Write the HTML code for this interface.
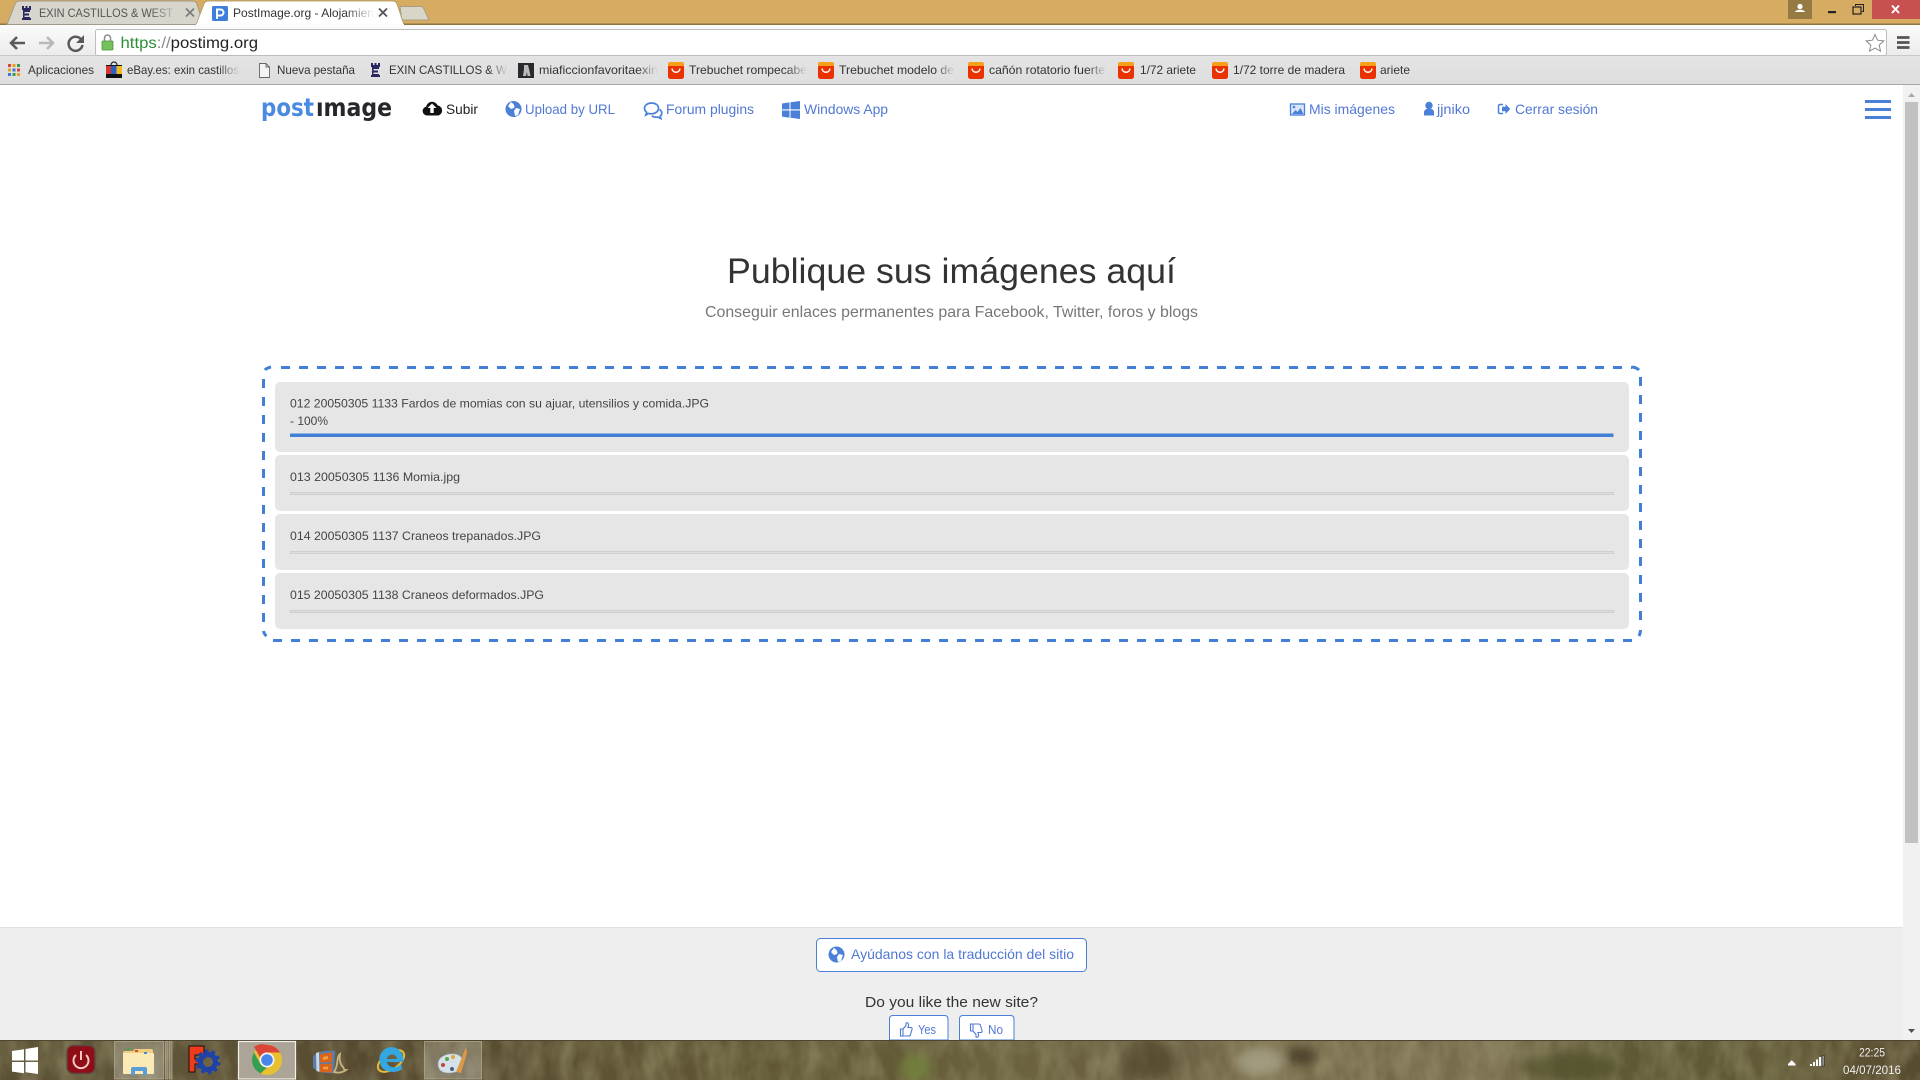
<!DOCTYPE html>
<html lang="es"><head><meta charset="utf-8"><title>PostImage.org</title>
<style>
html,body{margin:0;padding:0;width:1920px;height:1080px;overflow:hidden;background:#fff}
svg{display:block}
text{font-family:"Liberation Sans",Arial,sans-serif}
.bm{font-size:12px;fill:#333}
.nav{font-size:14px;fill:#5178d4}
.row{font-size:12px;fill:#444}
</style></head><body>
<svg width="1920" height="1080" viewBox="0 0 1920 1080" xmlns="http://www.w3.org/2000/svg">
<defs>
<linearGradient id="tool" x1="0" y1="0" x2="0" y2="1"><stop offset="0" stop-color="#fbfbfb"/><stop offset="1" stop-color="#ececec"/></linearGradient>
<linearGradient id="bmb" x1="0" y1="0" x2="0" y2="1"><stop offset="0" stop-color="#e4e4e4"/><stop offset="1" stop-color="#dedede"/></linearGradient>
<linearGradient id="tb" x1="0" y1="0" x2="1" y2="0">
<stop offset="0" stop-color="#5a5033"/><stop offset=".08" stop-color="#605538"/><stop offset=".2" stop-color="#56492f"/><stop offset=".3" stop-color="#5d5233"/><stop offset=".47" stop-color="#635a37"/><stop offset=".52" stop-color="#6c6340"/><stop offset=".6" stop-color="#6a5f42"/><stop offset=".66" stop-color="#7b6f4e"/><stop offset=".72" stop-color="#75694a"/><stop offset=".78" stop-color="#7a6f50"/><stop offset=".85" stop-color="#5f5a36"/><stop offset=".93" stop-color="#625a38"/><stop offset="1" stop-color="#574a2e"/></linearGradient>
<filter id="noise" x="0" y="0" width="100%" height="100%"><feTurbulence type="fractalNoise" baseFrequency=".05 .025" numOctaves="3" seed="7"/><feColorMatrix values="0 0 0 0 .5  0 0 0 0 .48  0 0 0 0 .28  1.4 0 0 0 -.45"/></filter>
<filter id="blur" x="-30%" y="-100%" width="160%" height="300%"><feGaussianBlur stdDeviation="5"/></filter>
<clipPath id="tbc"><rect y="1040" width="1920" height="40"/></clipPath>
<linearGradient id="fadeT1" x1="0" x2="1"><stop offset="0" stop-color="#d8d5cd" stop-opacity="0"/><stop offset="1" stop-color="#d8d5cd"/></linearGradient>
<linearGradient id="fadeT2" x1="0" x2="1"><stop offset="0" stop-color="#fff" stop-opacity="0"/><stop offset="1" stop-color="#fff"/></linearGradient>
<linearGradient id="fadeB" x1="0" x2="1"><stop offset="0" stop-color="#e1e1e1" stop-opacity="0"/><stop offset="1" stop-color="#e1e1e1"/></linearGradient>
<linearGradient id="tile" x1="0" y1="0" x2="0" y2="1"><stop offset="0" stop-color="#fff" stop-opacity=".2"/><stop offset="1" stop-color="#fff" stop-opacity=".26"/></linearGradient>
<g id="ali"><rect width="16" height="17" rx="2.5" fill="#ea3200"/><path d="M0 2.5A2.5 2.5 0 0 1 2.5 0h11A2.5 2.5 0 0 1 16 2.5V4H0z" fill="#f5a019"/><path d="M4 6.5c.5 5 7.500 5 8 0" fill="none" stroke="#fff" stroke-width="1.400"/></g>
<g id="exin" fill="#28285f"><path d="M0 0h2v2h1.500V0h2v2H7V0h2v4H8v2H2.500v1.500H7v2H2.500V11H8v1h1v2H0v-2h1V4H0z"/></g>
</defs>

<!-- title bar -->
<rect width="1920" height="24" fill="#d6ab62"/>
<rect y="23.500" width="1920" height="1.500" fill="#8d7543"/>
<!-- toolbar -->
<rect y="25" width="1920" height="30" fill="url(#tool)"/>
<rect y="55" width="1920" height="29" fill="url(#bmb)"/>
<rect y="55" width="1920" height="1" fill="#c9c9c9"/>
<rect y="84" width="1920" height="1" fill="#a8a8a8"/>

<!-- tabs -->
<path d="M7 24.500 15 4Q16 1 20 1H192Q196 1 197 4L203 24.500Z" fill="#d8d5cd" stroke="#a09a86"/>
<path d="M196 25 204 4Q205 1 209 1H392Q396 1 397 4L404 25Z" fill="#fff" stroke="#a5935f" stroke-width=".7"/>
<rect x="196" y="24" width="208" height="3" fill="#fbfbfb"/>
<path d="M400 6.500H421Q423 6.500 424 9L429 20H404Q402 20 401.500 18Z" fill="#d8d5c9" stroke="#a89e80"/>
<use href="#exin" x="22" y="6"/>
<text x="39" y="17" font-size="12" fill="#555" textLength="134" lengthAdjust="spacingAndGlyphs">EXIN CASTILLOS &amp; WEST</text>
<rect x="150" y="4" width="30" height="18" fill="url(#fadeT1)"/>
<path d="M186 8.500l8 8m0-8l-8 8" stroke="#7b7b7b" stroke-width="1.700"/>
<rect x="212" y="6" width="16" height="15" rx="1.500" fill="#3f7fdc"/>
<path d="M217 19V9.500h3.500a3 3 0 0 1 0 6H217" fill="none" stroke="#fff" stroke-width="2"/>
<text x="233" y="17" font-size="12" fill="#333" textLength="141" lengthAdjust="spacingAndGlyphs">PostImage.org - Alojamien</text>
<rect x="345" y="4" width="30" height="18" fill="url(#fadeT2)"/>
<path d="M379 8.500l8 8m0-8l-8 8" stroke="#555" stroke-width="1.800"/>

<!-- window controls -->
<rect x="1788" width="24" height="19" fill="#957a44"/>
<circle cx="1800" cy="6.500" r="2.600" fill="#fff"/><path d="M1795 12c.5-3 9.500-3 10 0z" fill="#fff"/>
<rect x="1828" y="11" width="8" height="2.200" fill="#222"/>
<rect x="1853" y="7" width="8" height="7" fill="none" stroke="#222" stroke-width="1.200"/><path d="M1855.500 6V4.500h8v7H1862" fill="none" stroke="#222" stroke-width="1"/>
<rect x="1872" width="48" height="19" fill="#c75050"/>
<path d="M1892 5.500l7 7.500m0-7.500l-7 7.500" stroke="#fff" stroke-width="1.900"/>

<!-- nav buttons -->
<path d="M25 43H11m6-6-6 6 6 6" fill="none" stroke="#5a5a5a" stroke-width="2.600"/>
<path d="M39 43h14m-6-6 6 6-6 6" fill="none" stroke="#b9b9b9" stroke-width="2.600"/>
<path d="M81.500 40A7 7 0 1 0 82.500 45" fill="none" stroke="#5a5a5a" stroke-width="2.500"/><path d="M84 35v8h-8z" fill="#5a5a5a"/>
<!-- omnibox -->
<rect x="95.500" y="29.500" width="1791" height="26" rx="2" fill="#fff" stroke="#bdbdbd"/>
<rect x="102" y="41" width="11" height="9" rx="1" fill="#74c25a" stroke="#4b8f3b" stroke-width=".8"/>
<path d="M104.500 41v-3a3 3 0 0 1 6 0v3" fill="none" stroke="#8a8a8a" stroke-width="1.500"/>
<text x="120.500" y="48" font-size="16" textLength="137.500" lengthAdjust="spacingAndGlyphs"><tspan fill="#2f8f35">https</tspan><tspan fill="#8a8a8a">://</tspan><tspan fill="#222">postimg.org</tspan></text>
<path d="M1875 34.500l2.600 5.700 6.200.7-4.600 4.200 1.300 6.100-5.500-3.100-5.500 3.100 1.300-6.100-4.600-4.200 6.200-.7z" fill="#fff" stroke="#8a8a8a" stroke-width="1"/>
<path d="M1897 37.500h12.500M1897 42.500h12.500M1897 47.500h12.500" stroke="#555" stroke-width="2.800"/>

<!-- bookmarks -->
<g>
<g fill="#d9453c"><rect x="8" y="64" width="3" height="3"/><rect x="12.500" y="64" width="3" height="3" fill="#e9a021"/><rect x="17" y="64" width="3" height="3" fill="#3c9a4c"/></g>
<g><rect x="8" y="68.500" width="3" height="3" fill="#e9a021"/><rect x="12.500" y="68.500" width="3" height="3" fill="#3b78d8"/><rect x="17" y="68.500" width="3" height="3" fill="#d9453c"/><rect x="8" y="73" width="3" height="3" fill="#3b78d8"/><rect x="12.500" y="73" width="3" height="3" fill="#3c9a4c"/><rect x="17" y="73" width="3" height="3" fill="#e9a021"/></g>
<text class="bm" x="28" y="74" textLength="66" lengthAdjust="spacingAndGlyphs">Aplicaciones</text>
<path d="M111 65a3 3 0 0 1 6 0" fill="none" stroke="#222" stroke-width="1.200"/>
<rect x="106" y="65" width="16" height="13" fill="#111"/><rect x="106" y="66" width="5" height="8" fill="#d8362e"/><rect x="111" y="66" width="5.500" height="8" fill="#2c5fc4"/><rect x="116.500" y="66" width="5.500" height="8" fill="#f0bb1a"/>
<text class="bm" x="127" y="74" textLength="112" lengthAdjust="spacingAndGlyphs">eBay.es: exin castillos</text>
<rect x="218" y="60" width="22" height="20" fill="url(#fadeB)"/>
<path d="M259.500 63.500h6.500l3.500 3.500v10.500h-10zM266 63.500V67h3.500" fill="#f3f3f3" stroke="#666" stroke-width=".9"/>
<text class="bm" x="277" y="74" textLength="78" lengthAdjust="spacingAndGlyphs">Nueva pestaña</text>
<use href="#exin" x="371" y="63"/>
<text class="bm" x="389" y="74" textLength="118" lengthAdjust="spacingAndGlyphs">EXIN CASTILLOS &amp; W</text>
<rect x="488" y="60" width="20" height="20" fill="url(#fadeB)"/>
<rect x="518" y="63" width="16" height="15" fill="#2a2a2e"/><path d="M524 65h4l1 4 1.500 7h-3l-.5-4-1 4h-3l1-7z" fill="#bbb"/>
<text class="bm" x="539" y="74" textLength="119" lengthAdjust="spacingAndGlyphs">miaficcionfavoritaexin</text>
<rect x="638" y="60" width="20" height="20" fill="url(#fadeB)"/>
<use href="#ali" x="668" y="62"/>
<text class="bm" x="689" y="74" textLength="118" lengthAdjust="spacingAndGlyphs">Trebuchet rompecabe</text>
<rect x="787" y="60" width="20" height="20" fill="url(#fadeB)"/>
<use href="#ali" x="818" y="62"/>
<text class="bm" x="839" y="74" textLength="115" lengthAdjust="spacingAndGlyphs">Trebuchet modelo de</text>
<rect x="935" y="60" width="20" height="20" fill="url(#fadeB)"/>
<use href="#ali" x="968" y="62"/>
<text class="bm" x="989" y="74" textLength="116" lengthAdjust="spacingAndGlyphs">cañón rotatorio fuerte</text>
<rect x="1087" y="60" width="20" height="20" fill="url(#fadeB)"/>
<use href="#ali" x="1118" y="62"/>
<text class="bm" x="1140" y="74" textLength="56" lengthAdjust="spacingAndGlyphs">1/72 ariete</text>
<use href="#ali" x="1212" y="62"/>
<text class="bm" x="1233" y="74" textLength="112" lengthAdjust="spacingAndGlyphs">1/72 torre de madera</text>
<use href="#ali" x="1360" y="62"/>
<text class="bm" x="1380" y="74" textLength="30" lengthAdjust="spacingAndGlyphs">ariete</text>
</g>

<!-- page nav -->
<text x="261" y="116" font-size="25" font-weight="700" style="font-family:'DejaVu Sans',sans-serif" fill="#4a8ae0" textLength="53" lengthAdjust="spacingAndGlyphs">post</text>
<text x="316" y="116" font-size="25" font-weight="700" style="font-family:'DejaVu Sans',sans-serif" fill="#26262b" textLength="76" lengthAdjust="spacingAndGlyphs">ımage</text>

<path d="M427 115.500a4.500 4.500 0 0 1-.8-8.900 6 6 0 0 1 11.400-1.200 5.200 5.200 0 0 1 .9 10.100z" fill="#111"/><path d="M432 102.500l4.500 4.500h-2.800v5h-3.400v-5h-2.800z" fill="#fff" transform="translate(0 1)"/>
<text x="446" y="114" font-size="14" fill="#222" textLength="32" lengthAdjust="spacingAndGlyphs">Subir</text>

<circle cx="513.500" cy="109" r="8" fill="#4a80d8"/><path d="M511 102c3 2 4 4 3 6l-3 1-3-3zM516 108l4 1-2 6-3 1-1-5z" fill="#fff"/>
<text class="nav" x="525" y="114" textLength="90" lengthAdjust="spacingAndGlyphs">Upload by URL</text>

<path d="M651.500 103c-4 0-7 2.300-7 5.300 0 1.700.9 3.100 2.200 4l-.9 2.700 3.100-1.600c.9.300 1.700.4 2.600.4 4 0 7-2.400 7-5.500s-3-5.300-7-5.300z" fill="#fff" stroke="#4a80d8" stroke-width="1.700"/><path d="M659.500 109.500c1.400.9 2.300 2.200 2.300 3.600 0 1.200-.6 2.200-1.600 3l.7 2.400-3-1.400c-2.200.4-4.600 0-6-1.300" fill="none" stroke="#4a80d8" stroke-width="1.700"/>
<text class="nav" x="666" y="114" textLength="88" lengthAdjust="spacingAndGlyphs">Forum plugins</text>

<path d="M782 103.500l7.500-1.100v7H782zM790.500 102.200 800 101v8.400h-9.500zM782 110.500h7.500v7.200L782 116.600zM790.500 110.500h9.500V119l-9.500-1.300z" fill="#4a80d8"/>
<text class="nav" x="804" y="114" textLength="84" lengthAdjust="spacingAndGlyphs">Windows App</text>

<rect x="1290.500" y="104" width="14" height="11" fill="#dbe6f8" stroke="#4a80d8" stroke-width="1.300"/><path d="M1292 114l3.500-4 2 2 3-4 3 6z" fill="#4a80d8"/><circle cx="1294" cy="107" r="1.300" fill="#4a80d8"/>
<text class="nav" x="1309" y="114" textLength="86" lengthAdjust="spacingAndGlyphs">Mis imágenes</text>

<circle cx="1429" cy="105.500" r="3.700" fill="#4a80d8"/><path d="M1424 115.500v-3c0-2.500 2-3.500 3-3.500h4c1.500 0 3 1 3 3.500v3z" fill="#4a80d8"/>
<text class="nav" x="1437" y="114" textLength="33" lengthAdjust="spacingAndGlyphs">jjniko</text>

<path d="M1503 104.500h-3q-1.500 0-1.500 1.500v6q0 1.500 1.500 1.500h3" fill="none" stroke="#4a80d8" stroke-width="1.500"/><path d="M1502 106.800h3.500V104l4.800 5-4.800 5v-2.800H1502z" fill="#4a80d8"/>
<text class="nav" x="1515" y="114" textLength="83" lengthAdjust="spacingAndGlyphs">Cerrar sesión</text>

<rect x="1865" y="100" width="26" height="3" fill="#4a80d8"/><rect x="1865" y="108" width="26" height="3" fill="#4a80d8"/><rect x="1865" y="116" width="26" height="3" fill="#4a80d8"/>

<!-- headings -->
<text x="727" y="283" font-size="35" fill="#333" textLength="449" lengthAdjust="spacingAndGlyphs">Publique sus imágenes aquí</text>
<text x="705" y="317" font-size="16" fill="#777" textLength="493" lengthAdjust="spacingAndGlyphs">Conseguir enlaces permanentes para Facebook, Twitter, foros y blogs</text>

<!-- dashed box -->
<g fill="none" stroke="#4280d8" stroke-width="3">
<line x1="281" y1="367.500" x2="1632" y2="367.500" stroke-dasharray="9 9"/>
<line x1="273" y1="640.500" x2="1633" y2="640.500" stroke-dasharray="9 9"/>
<line x1="263.500" y1="379" x2="263.500" y2="626" stroke-dasharray="9 9"/>
<line x1="1640.500" y1="377" x2="1640.500" y2="626" stroke-dasharray="9 9"/>
<path d="M265 370q1.500-2 6-3"/><path d="M1632 367q4.500 .5 7 3"/><path d="M263.500 631q.5 3 3 5"/><path d="M1640.500 630q0 3-1.500 6"/>
</g>

<!-- rows -->
<rect x="275" y="382" width="1354" height="70" rx="5" fill="#e6e6e6"/>
<rect x="275" y="455" width="1354" height="56" rx="5" fill="#e6e6e6"/>
<rect x="275" y="514" width="1354" height="56" rx="5" fill="#e6e6e6"/>
<rect x="275" y="573" width="1354" height="56" rx="5" fill="#e6e6e6"/>
<text class="row" x="290" y="407.500" textLength="419" lengthAdjust="spacingAndGlyphs">012 20050305 1133 Fardos de momias con su ajuar, utensilios y comida.JPG</text>
<text class="row" x="290" y="425" textLength="38" lengthAdjust="spacingAndGlyphs">- 100%</text>
<rect x="290" y="433.500" width="1323.500" height="3.500" fill="#4280d8"/>
<text class="row" x="290" y="481" textLength="170" lengthAdjust="spacingAndGlyphs">013 20050305 1136 Momia.jpg</text>
<rect x="290.500" y="492.500" width="1323" height="2" fill="#dedede" stroke="#cfcfcf"/>
<text class="row" x="290" y="540" textLength="251" lengthAdjust="spacingAndGlyphs">014 20050305 1137 Craneos trepanados.JPG</text>
<rect x="290.500" y="551.500" width="1323" height="2" fill="#dedede" stroke="#cfcfcf"/>
<text class="row" x="290" y="599" textLength="254" lengthAdjust="spacingAndGlyphs">015 20050305 1138 Craneos deformados.JPG</text>
<rect x="290.500" y="610.500" width="1323" height="2" fill="#dedede" stroke="#cfcfcf"/>

<!-- footer -->
<rect y="927" width="1903" height="113" fill="#eee"/>
<rect y="927" width="1903" height="1" fill="#e2e2e2"/>
<rect x="816.500" y="938.500" width="270" height="33" rx="4" fill="#fff" stroke="#4a80d8"/>
<circle cx="836.500" cy="954.500" r="8" fill="#4a80d8"/><path d="M834 948c3 2 4 4 3 6l-3 1-3-3zM839 954l4 1-2 6-3 1-1-5z" fill="#fff"/>
<text x="851" y="959" font-size="14" fill="#5178d4" textLength="223" lengthAdjust="spacingAndGlyphs">Ayúdanos con la traducción del sitio</text>
<text x="865" y="1007" font-size="15" fill="#333" textLength="173" lengthAdjust="spacingAndGlyphs">Do you like the new site?</text>
<path d="M889.500 1040v-21q0-3.500 3.500-3.500h51.500q3.500 0 3.500 3.500v21z" fill="#fff" stroke="#4a80d8"/>
<path d="M959.500 1040v-21q0-3.500 3.500-3.500h47.500q3.500 0 3.500 3.500v21z" fill="#fff" stroke="#4a80d8"/>
<path d="M900.500 1029h2.500v7h-2.500zM903 1029l3-3.500v-2.500q2-.8 2.500 1 .3 1.500-.5 3.500h3q1.500.2 1 2l-1.500 5q-.3 1.500-2 1.500H903" fill="none" stroke="#5178d4" stroke-width="1.100"/>
<text x="918" y="1034" font-size="13" fill="#5178d4" textLength="18" lengthAdjust="spacingAndGlyphs">Yes</text>
<path d="M970.500 1031h2.500v-7h-2.500zM973 1031l3 3.500v2.500q2 .8 2.500-1 .3-1.500-.5-3.500h3q1.500-.2 1-2l-1.500-5q-.3-1.500-2-1.500H973" fill="none" stroke="#5178d4" stroke-width="1.100"/>
<text x="988" y="1034" font-size="13" fill="#5178d4" textLength="15" lengthAdjust="spacingAndGlyphs">No</text>

<!-- scrollbar -->
<rect x="1903" y="85" width="17" height="955" fill="#f1f1f1"/>
<rect x="1905" y="102" width="13" height="741" fill="#c1c1c1"/>
<path d="M1908 97l3.500-4 3.500 4z" fill="#a8a8a8"/>
<path d="M1908 1029h7l-3.500 4z" fill="#505050"/>

<!-- taskbar -->
<rect y="1040" width="1920" height="40" fill="url(#tb)"/>
<rect y="1040" width="1920" height="40" filter="url(#noise)" opacity=".5"/>
<g clip-path="url(#tbc)">
<g filter="url(#blur)">
<ellipse cx="915" cy="1068" rx="16" ry="14" fill="#6f7e3a" opacity=".8"/>
<ellipse cx="1260" cy="1062" rx="24" ry="14" fill="#a8a488" opacity=".8"/>
<ellipse cx="1302" cy="1056" rx="16" ry="9" fill="#42361f" opacity=".75"/>
<ellipse cx="1570" cy="1068" rx="50" ry="14" fill="#4e5027" opacity=".7"/>
<ellipse cx="1150" cy="1060" rx="30" ry="20" fill="#4a3c24" opacity=".5"/>
</g>
</g>
<rect y="1040" width="1920" height="1" fill="#4e4630"/>

<path d="M12 1051l12-1.700v11.200H12zM25.500 1049 38 1047v13.500H25.500zM12 1062h12v11.300l-12-1.700zM25.500 1062H38v12l-12.500-1.800z" fill="#fff"/>

<rect x="67" y="1045.500" width="28" height="28" rx="6" fill="#8e0d17" stroke="#5d4a42" stroke-width="1.500"/>
<path d="M76 1055a7.500 7.500 0 1 0 10 0" fill="none" stroke="#f3c9c5" stroke-width="2"/><path d="M81 1051v9" stroke="#f3c9c5" stroke-width="2"/>

<rect x="114.500" y="1041.500" width="49" height="37.500" fill="url(#tile)" stroke="#b7ae96" stroke-opacity=".7"/>
<rect x="165.500" y="1041.500" width="2.500" height="37.500" fill="url(#tile)" stroke="#b7ae96" stroke-opacity=".7"/>
<rect x="169.500" y="1041.500" width="2.500" height="37.500" fill="url(#tile)" stroke="#b7ae96" stroke-opacity=".7"/>
<path d="M123 1053q0-2 2-2h8l2-2h16q2 0 2 2v21q0 2-2 2h-26q-2 0-2-2z" fill="#efcf7e"/>
<rect x="123" y="1053" width="31" height="21" rx="1" fill="#fbe9b6"/>
<rect x="127" y="1048" width="3" height="2" fill="#3fa648"/><rect x="135" y="1050" width="3" height="2" fill="#d74936"/><rect x="144" y="1052" width="3" height="2" fill="#3b8edb"/>
<path d="M131 1075v-6q0-2 2-2h12q2 0 2 2v6h-4v-4h-8v4z" fill="#5a9ed6"/>

<!-- F + gear -->
<path d="M189 1046h15v9h-9v4h4v5h-4v8h-6z" fill="#ef3b1a" stroke="#111"/>
<circle cx="208" cy="1062" r="7.500" fill="none" stroke="#1e42a8" stroke-width="5"/><circle cx="208" cy="1062" r="11" fill="none" stroke="#1e42a8" stroke-width="3" stroke-dasharray="3.500 3.400"/>

<rect x="238.500" y="1041.500" width="57" height="37.500" fill="#aca597" stroke="#f2f0ea" stroke-width="1.200"/>
<circle cx="267" cy="1060" r="15" fill="#e8c030"/>
<path d="M267 1045a15 15 0 0 1 13 7.500h-13a7.500 7.500 0 0 0-7 4.800l-6-10.500a15 15 0 0 1 13-1.800z" fill="#db4437"/>
<path d="M254 1052.500l6.500 11.500a7.500 7.500 0 0 0 6.500 3.500L260.500 1073.500a15 15 0 0 1-6.500-21z" fill="#349e53"/>
<circle cx="267" cy="1060" r="7.500" fill="#f4f4f4"/><circle cx="267" cy="1060" r="5.800" fill="#4a86e8"/>

<!-- movie maker -->
<path d="M313 1056c5-5 15-6 22-5l-1 22c-8 1-16-1-21-5z" fill="#5a7ca6"/>
<path d="M316 1053l3-1 .5 20-3-1z" fill="#cfd6de"/>
<path d="M320 1054l12-1.500v9.500l-12 .5zM320 1064l12-.5 0 9-12-.5z" fill="#d9641f"/>
<path d="M323 1057l5-1v3l-5 1zM323 1067l5-.5v3l-5-.5z" fill="#f2a03c"/>
<path d="M334 1072c5-7 2-15 6-18-1 5 0 10 3 13 1 2 1 3 3 3-4 3-9 3-12 2z" fill="none" stroke="#c8b483" stroke-width="1.800"/>

<ellipse cx="391" cy="1061" rx="15" ry="8" fill="none" stroke="#e8bd36" stroke-width="2" transform="rotate(-35 391 1061)"/>
<path d="M380 1063a12 12 0 1 1 23-1h-16c1 6 10 7 14 2l1 5c-6 5-20 4-22-6zm7-4h10c-.5-6-9-6-10 0z" fill="#34a7e0"/>

<rect x="424.500" y="1041.500" width="57" height="37.500" fill="url(#tile)" stroke="#b7ae96" stroke-opacity=".7"/>
<path d="M438 1064c0-8 10-11 17-10 6 1 9 5 7 11-2 7-8 8-13 8-7 0-11-3-11-9z" fill="#d6e2ea" stroke="#9aa6ae" stroke-width=".6"/>
<circle cx="443" cy="1065" r="2" fill="#c4443a"/><circle cx="447" cy="1059" r="2" fill="#5ba14a"/><circle cx="453" cy="1057" r="2" fill="#e0a93a"/><circle cx="452" cy="1069" r="2" fill="#47607c"/>
<path d="M456 1072l8-20 2-5 1 6-6 20z" fill="#dc9a44"/>

<!-- tray -->
<path d="M1788 1064h7.500l-3.750-3.800z" fill="#fff"/><rect x="1788" y="1064" width="7.500" height="1.500" fill="#fff"/>
<rect x="1810" y="1064" width="2" height="2" fill="#fff"/><rect x="1813" y="1062" width="2" height="4" fill="#fff"/><rect x="1816" y="1059.500" width="2" height="6.500" fill="#fff"/><rect x="1819" y="1057" width="2.200" height="9" fill="#fff"/><rect x="1822" y="1055.500" width="2.400" height="10.500" fill="#8f8f8f" stroke="#222" stroke-width=".5"/>
<text x="1859" y="1056.500" font-size="12" fill="#eee" textLength="26" lengthAdjust="spacingAndGlyphs">22:25</text>
<text x="1843" y="1074" font-size="12" fill="#eee" textLength="58" lengthAdjust="spacingAndGlyphs">04/07/2016</text>
</svg>
</body></html>
